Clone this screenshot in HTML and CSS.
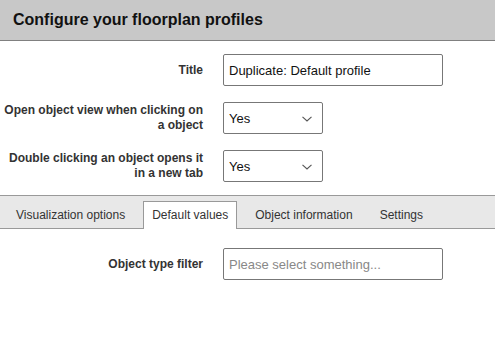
FILE: index.html
```html
<!DOCTYPE html>
<html lang="en">
<head>
    <meta charset="UTF-8">
    <meta name="viewport" content="width=device-width, initial-scale=1.0">
    <title>Floorplan profiles</title>
    <link rel="stylesheet" href="styles.css">
</head>
<body>
    <div class="header">
        <h1>Configure your floorplan profiles</h1>
    </div>

    <!-- General profile options -->
    <form class="profile-form">
        <div class="row">
            <label for="title">Title</label>
            <input type="text" id="title" class="text-input" value="Duplicate: Default profile">
        </div>
        <div class="row">
            <label for="open-view">Open object view when clicking on a object</label>
            <div class="select-wrap">
                <select id="open-view">
                    <option>Yes</option>
                    <option>No</option>
                </select>
                <svg class="chevron" width="10" height="6" viewBox="0 0 10 6"><path d="M0.5 0.8 L5 5 L9.5 0.8" fill="none" stroke="#555" stroke-width="1.1"/></svg>
            </div>
        </div>
        <div class="row">
            <label for="new-tab">Double clicking an object opens it in a new tab</label>
            <div class="select-wrap">
                <select id="new-tab">
                    <option>Yes</option>
                    <option>No</option>
                </select>
                <svg class="chevron" width="10" height="6" viewBox="0 0 10 6"><path d="M0.5 0.8 L5 5 L9.5 0.8" fill="none" stroke="#555" stroke-width="1.1"/></svg>
            </div>
        </div>
    </form>

    <!-- Tabs -->
    <div class="tabs">
        <span class="tab">Visualization options</span>
        <span class="tab active">Default values</span>
        <span class="tab">Object information</span>
        <span class="tab">Settings</span>
    </div>

    <div class="tab-content">
        <div class="row">
            <label for="type-filter">Object type filter</label>
            <input type="text" id="type-filter" class="text-input" placeholder="Please select something...">
        </div>
    </div>
</body>
</html>
```

FILE: styles.css
```css
body {
    margin: 0;
    font-family: "Liberation Sans", Arial, sans-serif;
    font-size: 13px;
    color: #333;
    background-color: #fff;
}

.header {
    height: 40px;
    display: flex;
    align-items: center;
    padding: 0 13px;
    background-color: #c8c8c8;
    border-bottom: 1px solid #808080;
}

h1 {
    margin: 0;
    font-size: 16px;
    font-weight: bold;
    color: #111;
}

.profile-form {
    margin: 0;
    padding: 13px 0;
    display: flex;
    flex-direction: column;
    gap: 16px;
}

.row {
    display: flex;
    align-items: center;
    gap: 20px;
}

.row label {
    width: 203px;
    text-align: right;
    font-weight: bold;
    font-size: 12px;
    line-height: 15px;
    color: #333;
}

.text-input {
    box-sizing: border-box;
    width: 220px;
    height: 32px;
    margin: 0;
    padding: 0 5px;
    border: 1px solid #777;
    border-radius: 2px;
    font-family: inherit;
    font-size: 13px;
    color: #111;
    background: #fff;
}

.text-input::placeholder {
    color: #888;
}

.select-wrap {
    position: relative;
    width: 100px;
    height: 32px;
}

.select-wrap select {
    box-sizing: border-box;
    width: 100%;
    height: 100%;
    margin: 0;
    padding: 0 5px;
    border: 1px solid #777;
    border-radius: 2px;
    appearance: none;
    font-family: inherit;
    font-size: 13px;
    color: #111;
    background: #fff;
}

.chevron {
    position: absolute;
    right: 11px;
    top: 14px;
    pointer-events: none;
}

.tabs {
    display: flex;
    align-items: flex-end;
    gap: 9px;
    height: 32px;
    padding: 0 7px;
    background-color: #e8e8e8;
    border-top: 1px solid #999;
    border-bottom: 1px solid #999;
}

.tab {
    padding: 0 8px;
    line-height: 26px;
    font-size: 12px;
    color: #333;
    border: 1px solid transparent;
    border-bottom: none;
}

.tab.active {
    background-color: #fff;
    border-color: #999;
    margin-bottom: -1px;
    line-height: 27px;
}

.tab-content {
    padding-top: 19px;
}
```
